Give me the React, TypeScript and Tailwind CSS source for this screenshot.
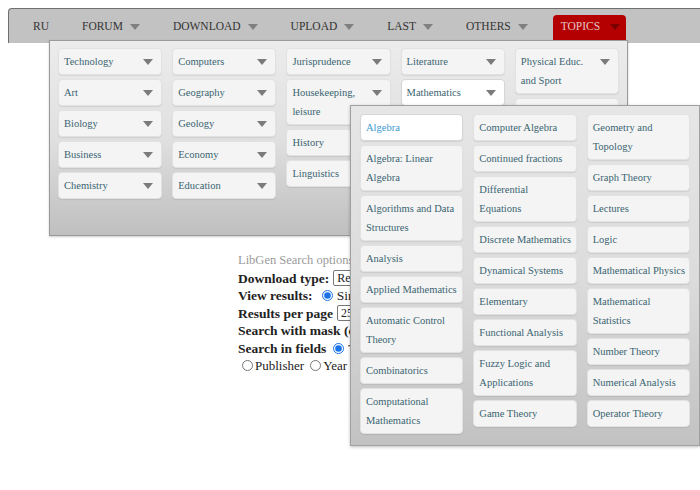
import React from 'react'

const NAV = ['RU', 'FORUM', 'DOWNLOAD', 'UPLOAD', 'LAST', 'OTHERS']

const TOPIC_COLS: string[][] = [
  ['Technology', 'Art', 'Biology', 'Business', 'Chemistry'],
  ['Computers', 'Geography', 'Geology', 'Economy', 'Education'],
  ['Jurisprudence', 'Housekeeping, leisure', 'History', 'Linguistics'],
  ['Literature', 'Mathematics', 'Medicine', 'Other Social Sciences', 'Physics'],
  ['Physical Educ. and Sport', 'Psychology', 'Religion', 'Science (general)'],
]

const MATH_COLS: string[][] = [
  [
    'Algebra',
    'Algebra: Linear Algebra',
    'Algorithms and Data Structures',
    'Analysis',
    'Applied Mathematics',
    'Automatic Control Theory',
    'Combinatorics',
    'Computational Mathematics',
  ],
  [
    'Computer Algebra',
    'Continued fractions',
    'Differential Equations',
    'Discrete Mathematics',
    'Dynamical Systems',
    'Elementary',
    'Functional Analysis',
    'Fuzzy Logic and Applications',
    'Game Theory',
  ],
  [
    'Geometry and Topology',
    'Graph Theory',
    'Lectures',
    'Logic',
    'Mathematical Physics',
    'Mathematical Statistics',
    'Number Theory',
    'Numerical Analysis',
    'Operator Theory',
  ],
]

function Caret({ className }: { className: string }) {
  return (
    <svg width="10" height="6" viewBox="0 0 10 6" className={className}>
      <path d="M0 0h10L5 6z" fill="currentColor" />
    </svg>
  )
}

function TopicItem({ label, active }: { label: string; active?: boolean }) {
  return (
    <div
      className={`flex justify-between items-start pl-[5px] pr-[8px] py-[3px] leading-[19px] rounded-[4px] border shadow-[0_1px_1px_rgba(0,0,0,0.08)] ${
        active ? 'bg-white border-[#d6d6d6]' : 'bg-[#f4f4f4] border-[#e2e2e2]'
      }`}
    >
      <span className="text-[#3a6471]">{label}</span>
      <Caret className="mt-[7px] shrink-0 text-[#7b7b7b]" />
    </div>
  )
}

function MathItem({ label, active }: { label: string; active?: boolean }) {
  return (
    <div
      className={`pl-[5px] pr-[3.3px] py-[3px] leading-[19px] rounded-[4px] border shadow-[0_1px_1px_rgba(0,0,0,0.08)] ${
        active ? 'bg-white border-[#d6d6d6] text-[#3d9ad1]' : 'bg-[#f4f4f4] border-[#e2e2e2] text-[#3a6471]'
      }`}
    >
      {label}
    </div>
  )
}

export default function App() {
  return (
    <div className="relative w-[700px] h-[490px] overflow-hidden bg-white pt-2 font-['Liberation_Serif',serif] text-[#222]">
      {/* top nav */}
      <div className="ml-2 h-[35px] flex items-end gap-[17px] pl-[16px] bg-[#c2c2c2] border-t border-l border-[#6f6f6f] rounded-tl-[4px] text-[11.5px] text-[#333]">
        {NAV.map(n => (
          <div key={n} className="h-[28px] flex items-center gap-[7px] px-2 pb-[4px]">
            <span>{n}</span>
            {n !== 'RU' && <Caret className="text-[#808080]" />}
          </div>
        ))}
        <div className="h-[28px] flex items-center gap-[10px] pl-2 pr-[6px] pb-[4px] bg-[#b40000] rounded-t-[4px]">
          <span className="text-[#e3c4c4]">TOPICS</span>
          <Caret className="text-[#7a0000]" />
        </div>
      </div>

      {/* search options */}
      <div className="pt-[209px] pl-[238px] text-[13.5px] leading-[17.5px] whitespace-nowrap">
        <div className="text-[12.5px] text-[#9a9a9a]">LibGen Search options</div>
        <div className="flex items-center">
          <b>Download type:</b>
          <span className="ml-[4px] h-[16px] px-[3px] border border-[#767676] rounded-[2px] text-[12px] leading-[14px] font-normal">
            Resumed dl with original filename
          </span>
        </div>
        <div className="flex items-center">
          <b>View results:</b>
          <input type="radio" defaultChecked className="ml-[9px] mr-[4px] w-[11px] h-[11px] accent-[#1a73e8]" />
          <span>Simple</span>
        </div>
        <div className="flex items-center">
          <b>Results per page</b>
          <span className="ml-[4px] h-[16px] px-[3px] border border-[#767676] rounded-[2px] text-[12px] leading-[14px]">25</span>
        </div>
        <div>
          <b>Search with mask (e.g. 'wor*')</b>
        </div>
        <div className="flex items-center">
          <b>Search in fields</b>
          <input type="radio" defaultChecked className="ml-[7px] mr-[4px] w-[11px] h-[11px] accent-[#1a73e8]" />
          <span>The column set default</span>
        </div>
        <div className="flex items-center text-[13px]">
          <input type="radio" className="ml-[4px] mr-[2px] w-[11px] h-[11px]" />
          <span>Publisher</span>
          <input type="radio" className="ml-[6px] mr-[2px] w-[11px] h-[11px]" />
          <span>Year</span>
        </div>
      </div>

      {/* topics dropdown */}
      <div className="absolute left-[49px] top-[40px] w-[579px] h-[196px] px-[8px] pt-[7px] grid grid-cols-5 gap-x-[10px] items-start bg-gradient-to-b from-[#ececec] via-[#e0e0e0] to-[#bfbfbf] border border-[#9a9a9a] shadow-[0_1px_2px_rgba(0,0,0,0.2)] text-[10.5px]">
        {TOPIC_COLS.map((col, i) => (
          <div key={i} className="flex flex-col gap-[4px]">
            {col.map(t => (
              <TopicItem key={t} label={t} active={t === 'Mathematics'} />
            ))}
          </div>
        ))}
      </div>

      {/* mathematics submenu */}
      <div className="absolute left-[350px] top-[105px] w-[350px] h-[341px] px-[9px] pt-[8px] grid grid-cols-3 gap-x-[10px] items-start bg-gradient-to-b from-[#e6e6e6] via-[#dcdcdc] to-[#c2c2c2] border border-[#a0a0a0] shadow-[0_1px_3px_rgba(0,0,0,0.25)] text-[10.5px]">
        {MATH_COLS.map((col, i) => (
          <div key={i} className="flex flex-col gap-[4px]">
            {col.map(t => (
              <MathItem key={t} label={t} active={t === 'Algebra'} />
            ))}
          </div>
        ))}
      </div>
    </div>
  )
}
